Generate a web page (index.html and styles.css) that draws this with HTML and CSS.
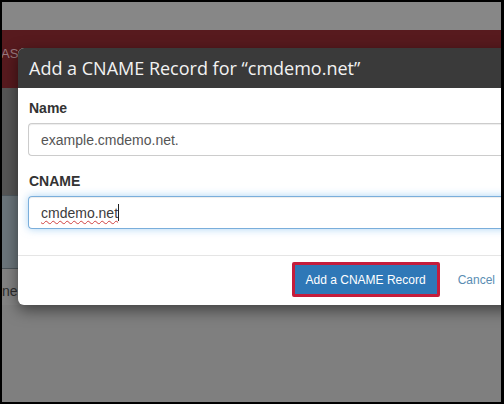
FILE: index.html
```html
<!DOCTYPE html>
<html>
<head>
<meta charset="utf-8">
<link rel="stylesheet" href="styles.css">
</head>
<body>
<div class="frame">
  <div class="page">
    <div class="topbar"></div>
    <div class="navbar"><span class="nav-text">AS</span></div>
    <div class="dark"></div>
    <div class="panel"></div>
    <div class="row"><span class="row-text">ne</span></div>
    <div class="rest"></div>
  </div>
  <div class="modal">
    <div class="modal-header">
      <h4 class="modal-title">Add a CNAME Record for “cmdemo.net”</h4>
    </div>
    <div class="modal-body">
      <div class="label">Name</div>
      <div class="input"><span class="input-text">example.cmdemo.net.</span></div>
      <div class="label label-second">CNAME</div>
      <div class="input input-focus"><span class="input-value">cmdemo.net</span><span class="caret"></span></div>
    </div>
    <div class="modal-footer">
      <span class="highlight"><span class="btn">Add a CNAME Record</span></span>
      <span class="cancel">Cancel</span>
    </div>
  </div>
</div>
</body>
</html>
```

FILE: styles.css
```css
html, body {
  margin: 0;
  padding: 0;
  background: #000;
}

.frame {
  position: relative;
  width: 504px;
  height: 404px;
  box-sizing: border-box;
  border-style: solid;
  border-color: #000;
  border-width: 2px 3px 2px 2px;
  overflow: hidden;
  background: #7f7f7f;
}

.page {
  display: flex;
  flex-direction: column;
  height: 100%;
  font-family: "Liberation Sans", Arial, sans-serif;
}

.topbar {
  height: 28px;
  background: #878787;
}

.navbar {
  height: 58px;
  background: #571a1e;
  box-sizing: border-box;
  padding-top: 16px;
}

.nav-text {
  display: block;
  font-size: 13px;
  line-height: 16px;
  color: #9a7a7e;
  margin-left: -1px;
}

.dark {
  height: 107px;
  background: #565656;
}

.panel {
  height: 72px;
  background: #6b757b;
  border-top: 1px solid #4f595f;
  border-bottom: 1px solid #4c555a;
}

.row {
  height: 36px;
  background: #838383;
  box-sizing: border-box;
  padding-top: 14px;
}

.row-text {
  display: block;
  font-size: 14px;
  line-height: 16px;
  color: #2e2e2e;
  margin-left: 0;
}

.rest {
  flex: 1;
  background: #7f7f7f;
}

.modal {
  position: absolute;
  left: 16px;
  top: 46px;
  width: 520px;
  background: #fff;
  border-radius: 6px;
  box-shadow: 0 5px 15px rgba(0, 0, 0, 0.5);
  overflow: hidden;
}

.modal-header {
  height: 40px;
  background: #3a3a3a;
  box-sizing: border-box;
  padding: 7px 11px 0;
}

.modal-title {
  margin: 0;
  font-family: "Open Sans", sans-serif;
  font-weight: 400;
  font-size: 18px;
  line-height: 26px;
  color: #f2f2f2;
}

.modal-body {
  padding: 10px 0 26px 10px;
}

.label {
  font-family: "Liberation Sans", Arial, sans-serif;
  font-weight: bold;
  font-size: 14px;
  line-height: 20px;
  color: #333;
  margin: 0 0 5px 1px;
}

.label-second {
  margin-top: 15px;
}

.input {
  display: flex;
  align-items: center;
  height: 33px;
  box-sizing: border-box;
  border: 1px solid #ccc;
  border-right: none;
  border-radius: 4px 0 0 4px;
  padding-left: 12px;
  font-family: "Liberation Sans", Arial, sans-serif;
  font-size: 14px;
  color: #555;
  box-shadow: inset 0 1px 1px rgba(0, 0, 0, 0.075);
}

.input-focus {
  border-color: #7aaedb;
  box-shadow: inset 0 1px 1px rgba(0, 0, 0, 0.075), 0 0 8px rgba(102, 175, 233, 0.55);
  color: #3c3c3c;
}

.input-value {
  text-decoration: underline wavy #d04040;
  text-decoration-thickness: 1px;
  text-underline-offset: 2px;
}

.caret {
  display: inline-block;
  width: 1px;
  height: 17px;
  background: #222;
  margin-left: 0;
}

.modal-footer {
  display: flex;
  justify-content: flex-end;
  align-items: center;
  gap: 18px;
  height: 50px;
  box-sizing: border-box;
  border-top: 1px solid #e5e5e5;
  padding: 0 43px 0 0;
}

.highlight {
  display: inline-flex;
  border: 3px solid #c51d3c;
  border-radius: 2px;
  margin-top: -2px;
}

.btn {
  display: inline-flex;
  align-items: center;
  height: 29px;
  padding: 0 11px;
  background: #2f78b7;
  color: #fff;
  font-family: "Liberation Sans", Arial, sans-serif;
  font-size: 12px;
}

.cancel {
  font-family: "Liberation Sans", Arial, sans-serif;
  font-size: 12px;
  color: #5a8db3;
  margin-top: -2px;
}
```
